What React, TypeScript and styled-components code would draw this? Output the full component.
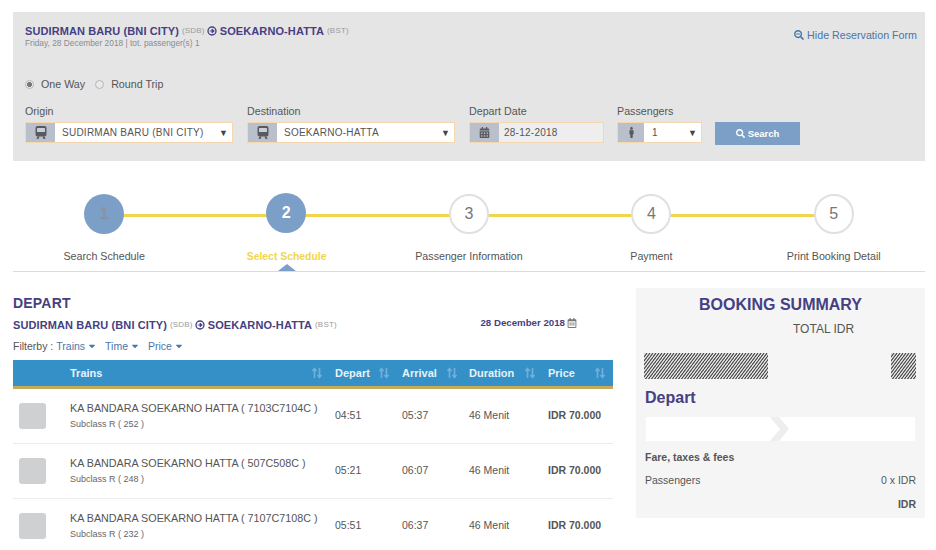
import React from "react";
import styled, { createGlobalStyle } from "styled-components";
import { FaMale, FaSearch, FaSearchMinus, FaCaretDown, FaRegCalendarAlt, FaCalendarAlt } from "react-icons/fa";

const Global = createGlobalStyle`
  html, body { margin: 0; padding: 0; background: #fff; }
  body { font-family: "Liberation Sans", Arial, sans-serif; color: #555; overflow: hidden; height: 550px; }
  * { box-sizing: border-box; }
`;

const Page = styled.div`
  width: 936px;
  height: 550px;
  padding: 12px 11px 0 13px;
  overflow: hidden;
`;

const Panel = styled.section`
  height: 149px;
  background: #e5e5e6;
  padding: 12px 8px 0 12px;
  display: flex;
  flex-direction: column;
`;

const PanelHead = styled.div`
  display: flex;
  justify-content: space-between;
  align-items: flex-start;
  height: 39px;
`;

const RouteLine = styled.div`
  display: flex;
  align-items: center;
  gap: 3px;
  height: 13px;
  font-size: 11px;
  font-weight: 700;
  color: #463f82;
  letter-spacing: 0.1px;
  white-space: nowrap;
  svg { margin: 0 0 0 -1px; }
`;

const Code = styled.span`
  font-size: 8px;
  font-weight: 400;
  color: #9a9a9e;
  letter-spacing: 0.2px;
`;

const SubLine = styled.div`
  font-size: 8.35px;
  line-height: 11px;
  color: #8c8c8c;
  margin-top: 1px;
`;

const HideLink = styled.a`
  display: flex;
  align-items: center;
  gap: 3px;
  font-size: 10.7px;
  color: #4a76a8;
  margin-top: 5px;
  svg { font-size: 10px; }
`;

const TripRow = styled.div`
  display: flex;
  align-items: center;
  height: 14px;
  margin-top: 14px;
  font-size: 10.7px;
  color: #555;
`;

const Radio = styled.span<{ $on?: boolean }>`
  width: 9px;
  height: 9px;
  border-radius: 50%;
  border: 1px solid #b5b5b5;
  background: ${(p) => (p.$on ? "radial-gradient(circle, #777 0 2.2px, #eee 2.8px)" : "#e9e9e9")};
  margin-right: 7px;
  margin-left: ${(p) => (p.$on ? 0 : 10)}px;
`;

const FormRow = styled.div`
  display: flex;
  align-items: flex-start;
  margin-top: 14px;
`;

const Field = styled.div<{ $w: number; $mr: number }>`
  width: ${(p) => p.$w}px;
  margin-right: ${(p) => p.$mr}px;
`;

const FieldLabel = styled.div`
  font-size: 10.7px;
  line-height: 13px;
  color: #555;
  margin-bottom: 4px;
`;

const Control = styled.div<{ $tint?: boolean }>`
  height: 21px;
  display: flex;
  align-items: stretch;
  border: 1px solid #f4d7b0;
  background: ${(p) => (p.$tint ? "#eeeeee" : "#fff")};
  font-size: 10px;
  color: #555;
  letter-spacing: 0.25px;
`;

const Addon = styled.span<{ $w: number }>`
  width: ${(p) => p.$w}px;
  flex: none;
  background: #b9c0cc;
  display: flex;
  align-items: center;
  justify-content: center;
  color: #5a5a5e;
  font-size: 11px;
`;

const ControlText = styled.span<{ $pl: number }>`
  flex: 1;
  display: flex;
  align-items: center;
  padding-left: ${(p) => p.$pl}px;
  white-space: nowrap;
`;

const Arrow = styled.span`
  width: 13px;
  flex: none;
  display: flex;
  align-items: center;
  font-size: 9px;
  color: #444;
`;

const SearchButton = styled.button`
  width: 85px;
  height: 23px;
  margin-top: 17px;
  border: 0;
  background: #7b9fc7;
  color: #fff;
  font: 700 9.5px "Liberation Sans", Arial, sans-serif;
  display: flex;
  align-items: center;
  justify-content: center;
  gap: 3px;
  padding: 0;
  svg { font-size: 9px; }
`;

const Stepper = styled.section`
  position: relative;
  display: grid;
  grid-template-columns: repeat(5, 1fr);
  height: 111px;
  border-bottom: 1px solid #dcdcdc;
`;

const Step = styled.div`
  position: relative;
  display: flex;
  flex-direction: column;
  align-items: center;
  padding-top: 33px;
`;

const Connector = styled.span`
  position: absolute;
  top: 53px;
  left: 50%;
  width: 100%;
  height: 3px;
  background: #f0d64e;
`;

const Bubble = styled.span<{ $done?: boolean; $active?: boolean }>`
  position: relative;
  z-index: 1;
  width: 40px;
  height: 40px;
  border-radius: 50%;
  display: flex;
  align-items: center;
  justify-content: center;
  font-size: 16px;
  margin-top: ${(p) => (p.$active ? -1 : 0)}px;
  margin-bottom: ${(p) => (p.$active ? 1 : 0)}px;
  margin-left: ${(p) => (p.$active ? -1 : 0)}px;
  font-weight: ${(p) => (p.$active || p.$done ? 700 : 400)};
  background: ${(p) => (p.$done || p.$active ? "#7b9fc7" : "#fff")};
  border: ${(p) => (p.$done || p.$active ? "none" : "2px solid #e0e0e0")};
  color: ${(p) => (p.$active ? "#fff" : p.$done ? "#8a93a0" : "#777")};
`;

const StepLabel = styled.span<{ $active?: boolean }>`
  margin-top: ${(p) => (p.$active ? 16 : 15)}px;
  font-size: ${(p) => (p.$active ? 10.4 : 10.7)}px;
  line-height: 14px;
  color: ${(p) => (p.$active ? "#f0d64e" : "#555")};
  font-weight: ${(p) => (p.$active ? 700 : 400)};
  white-space: nowrap;
`;

const Pointer = styled.span`
  position: absolute;
  left: 50%;
  bottom: 0;
  margin-left: -9px;
  width: 0;
  height: 0;
  border-left: 9px solid transparent;
  border-right: 9px solid transparent;
  border-bottom: 7px solid #7b9fc7;
`;

const Content = styled.div`
  display: flex;
  justify-content: space-between;
`;

const Results = styled.section`
  width: 600px;
  padding-top: 24px;
`;

const DepartTitle = styled.h2`
  margin: 0;
  font-size: 14px;
  line-height: 15px;
  font-weight: 700;
  color: #463f82;
  letter-spacing: 0.2px;
`;

const RouteBar = styled.div`
  display: flex;
  align-items: center;
  justify-content: space-between;
  margin-top: 7px;
  padding-right: 36px;
`;

const DateTag = styled.div`
  display: flex;
  align-items: center;
  gap: 2px;
  margin-top: -4px;
  font-size: 9.7px;
  font-weight: 700;
  color: #463f82;
  svg { font-size: 10px; color: #777; }
`;

const FilterBar = styled.div`
  display: flex;
  align-items: center;
  height: 14px;
  margin-top: 8px;
  font-size: 10.5px;
  color: #555;
`;

const FilterLink = styled.a`
  display: inline-flex;
  align-items: center;
  gap: 2px;
  color: #4a76a8;
  margin-right: 8px;
  &:first-of-type { margin-left: 3px; }
  svg { font-size: 10px; }
`;

const columns = "57px 265px 67px 67px 79px 65px";

const TableHead = styled.div`
  display: grid;
  grid-template-columns: ${columns};
  height: 29px;
  margin-top: 7px;
  background: #3490c6;
  border-bottom: 3px solid #c7a95a;
  align-items: center;
  color: #e8f2f8;
  font-size: 11px;
  font-weight: 700;
`;

const HeadCell = styled.div<{ $pr?: number }>`
  display: flex;
  justify-content: space-between;
  align-items: center;
  padding-right: ${(p) => p.$pr ?? 12}px;
`;

const SortIcon = styled.svg`
  width: 12px;
  height: 12px;
  color: #6eb0da;
`;

const Row = styled.div`
  display: grid;
  grid-template-columns: ${columns};
  height: 55px;
  align-items: center;
  border-bottom: 1px solid #ececec;
  font-size: 10.5px;
  color: #555;
`;

const Thumb = styled.span`
  display: block;
  width: 27px;
  height: 26px;
  margin-left: 6px;
  border-radius: 3px;
  background: #cfd0d2;
`;

const TrainInfo = styled.div`
  margin-top: -2px;
`;

const TrainName = styled.div`
  font-size: 10.75px;
  line-height: 14px;
  white-space: nowrap;
`;

const Subclass = styled.div`
  font-size: 9px;
  line-height: 12px;
  margin-top: 3px;
  color: #666;
`;

const Cell = styled.div<{ $strong?: boolean }>`
  margin-top: -3px;
  font-weight: ${(p) => (p.$strong ? 700 : 400)};
  white-space: nowrap;
`;

const Summary = styled.aside`
  width: 289px;
  height: 230px;
  margin-top: 16px;
  background: #f5f5f6;
  padding: 7px 9px 0 8px;
`;

const SummaryTitle = styled.h3`
  margin: 0;
  text-align: center;
  padding-left: 1px;
  font-size: 16px;
  line-height: 20px;
  font-weight: 700;
  color: #463f82;
`;

const TotalLine = styled.div`
  font-size: 12px;
  line-height: 14px;
  color: #555;
  margin-top: 7px;
  padding-left: 149px;
`;

const HatchRow = styled.div`
  display: flex;
  justify-content: space-between;
  margin-top: 17px;
`;

const HatchSvg = styled.svg`
  display: block;
  height: 26px;
`;

const SummaryDepart = styled.div`
  font-size: 16px;
  line-height: 20px;
  font-weight: 700;
  color: #463f82;
  margin-top: 9px;
  padding-left: 1px;
`;

const RouteStrip = styled.div`
  height: 24px;
  margin: 9px 1px 0 2px;
  background: #fff;
  display: flex;
  align-items: center;
  padding-left: 124px;
  svg { width: 20px; height: 24px; }
`;

const SummaryLine = styled.div<{ $bold?: boolean; $mt: number }>`
  display: flex;
  justify-content: space-between;
  margin-top: ${(p) => p.$mt}px;
  padding-left: 1px;
  font-size: 10.5px;
  line-height: 13px;
  font-weight: ${(p) => (p.$bold ? 700 : 400)};
  color: #555;
`;

const CircleArrow = () => (
  <svg width="10" height="10" viewBox="0 0 12 12" aria-hidden="true">
    <circle cx="6" cy="6" r="4.8" fill="none" stroke="currentColor" strokeWidth="1.6" />
    <path d="M3.2 6H7M6 3.6 8.8 6 6 8.4Z" fill="currentColor" stroke="currentColor" strokeWidth="1" />
  </svg>
);

const Sort = () => (
  <SortIcon viewBox="0 0 12 12" aria-hidden="true">
    <path d="M3.5 11V3M1.5 4 3.5 1.5 5.5 4M8.5 1v8M6.5 8l2 2.5 2-2.5" fill="none" stroke="currentColor" strokeWidth="1.7" />
  </SortIcon>
);

const TrainGlyph = () => (
  <svg width="12" height="13" viewBox="0 0 12 13" aria-hidden="true">
    <path d="M2.5 0h7A2 2 0 0 1 11.5 2v6.5a2 2 0 0 1-2 2h-7a2 2 0 0 1-2-2V2a2 2 0 0 1 2-2Z" fill="currentColor" />
    <rect x="2" y="2" width="8" height="4" rx="0.5" fill="#c9ced6" />
    <path d="M2.5 10.5h2L3.5 13h-2ZM9.5 10.5h-2l1 2.5h2Z" fill="currentColor" />
  </svg>
);

const Hatch = ({ w, id }: { w: number; id: string }) => (
  <HatchSvg width={w} viewBox={`0 0 ${w} 26`} aria-hidden="true">
    <defs>
      <pattern id={id} width="3" height="4" patternUnits="userSpaceOnUse">
        <rect width="3" height="4" fill="#efefef" />
        <path d="M-1.5 6 4.5 -2" stroke="#3f3f3f" strokeWidth="1.1" />
        <path d="M-3 4 0 0M3 4 6 0" stroke="#3f3f3f" strokeWidth="1.1" />
      </pattern>
    </defs>
    <rect width={w} height="26" fill={`url(#${id})`} />
  </HatchSvg>
);

const Route = () => (
  <RouteLine>
    <span>SUDIRMAN BARU (BNI CITY)</span>
    <Code>(SDB)</Code>
    <CircleArrow />
    <span>SOEKARNO-HATTA</span>
    <Code>(BST)</Code>
  </RouteLine>
);

const steps = ["Search Schedule", "Select Schedule", "Passenger Information", "Payment", "Print Booking Detail"];

const trains = [
  { name: "KA BANDARA SOEKARNO HATTA ( 7103C7104C )", sub: "Subclass R ( 252 )", dep: "04:51", arr: "05:37" },
  { name: "KA BANDARA SOEKARNO HATTA ( 507C508C )", sub: "Subclass R ( 248 )", dep: "05:21", arr: "06:07" },
  { name: "KA BANDARA SOEKARNO HATTA ( 7107C7108C )", sub: "Subclass R ( 232 )", dep: "05:51", arr: "06:37" },
];

export default function App() {
  return (
    <Page>
      <Global />
      <Panel>
        <PanelHead>
          <div>
            <Route />
            <SubLine>Friday, 28 December 2018 | tot. passenger(s) 1</SubLine>
          </div>
          <HideLink><FaSearchMinus />Hide Reservation Form</HideLink>
        </PanelHead>
        <TripRow>
          <Radio $on />One Way<Radio />Round Trip
        </TripRow>
        <FormRow>
          <Field $w={208} $mr={14}>
            <FieldLabel>Origin</FieldLabel>
            <Control>
              <Addon $w={29}><TrainGlyph /></Addon>
              <ControlText $pl={7}>SUDIRMAN BARU (BNI CITY)</ControlText>
              <Arrow>▼</Arrow>
            </Control>
          </Field>
          <Field $w={208} $mr={14}>
            <FieldLabel>Destination</FieldLabel>
            <Control>
              <Addon $w={29}><TrainGlyph /></Addon>
              <ControlText $pl={7}>SOEKARNO-HATTA</ControlText>
              <Arrow>▼</Arrow>
            </Control>
          </Field>
          <Field $w={135} $mr={13}>
            <FieldLabel>Depart Date</FieldLabel>
            <Control $tint>
              <Addon $w={29}><FaCalendarAlt /></Addon>
              <ControlText $pl={5}>28-12-2018</ControlText>
            </Control>
          </Field>
          <Field $w={85} $mr={13}>
            <FieldLabel>Passengers</FieldLabel>
            <Control>
              <Addon $w={26}><FaMale /></Addon>
              <ControlText $pl={8}>1</ControlText>
              <Arrow>▼</Arrow>
            </Control>
          </Field>
          <SearchButton><FaSearch />Search</SearchButton>
        </FormRow>
      </Panel>

      <Stepper>
        {steps.map((label, i) => (
          <Step key={label}>
            {i < steps.length - 1 && <Connector />}
            <Bubble $done={i === 0} $active={i === 1}>{i + 1}</Bubble>
            <StepLabel $active={i === 1}>{label}</StepLabel>
            {i === 1 && <Pointer />}
          </Step>
        ))}
      </Stepper>

      <Content>
        <Results>
          <DepartTitle>DEPART</DepartTitle>
          <RouteBar>
            <Route />
            <DateTag>28 December 2018 <FaRegCalendarAlt /></DateTag>
          </RouteBar>
          <FilterBar>
            Filterby :
            <FilterLink>Trains<FaCaretDown /></FilterLink>
            <FilterLink>Time<FaCaretDown /></FilterLink>
            <FilterLink>Price<FaCaretDown /></FilterLink>
          </FilterBar>
          <TableHead>
            <span />
            <HeadCell>Trains<Sort /></HeadCell>
            <HeadCell>Depart<Sort /></HeadCell>
            <HeadCell $pr={11}>Arrival<Sort /></HeadCell>
            <HeadCell>Duration<Sort /></HeadCell>
            <HeadCell $pr={7}>Price<Sort /></HeadCell>
          </TableHead>
          {trains.map((t) => (
            <Row key={t.name}>
              <Thumb />
              <TrainInfo>
                <TrainName>{t.name}</TrainName>
                <Subclass>{t.sub}</Subclass>
              </TrainInfo>
              <Cell>{t.dep}</Cell>
              <Cell>{t.arr}</Cell>
              <Cell>46 Menit</Cell>
              <Cell $strong>IDR 70.000</Cell>
            </Row>
          ))}
        </Results>
        <Summary>
          <SummaryTitle>BOOKING SUMMARY</SummaryTitle>
          <TotalLine>TOTAL IDR</TotalLine>
          <HatchRow>
            <Hatch w={124} id="hatch-a" />
            <Hatch w={25} id="hatch-b" />
          </HatchRow>
          <SummaryDepart>Depart</SummaryDepart>
          <RouteStrip>
            <svg viewBox="0 0 20 24" aria-hidden="true">
              <path d="M0 0h9l10 12-10 12H0l10-12Z" fill="#eeeeef" />
            </svg>
          </RouteStrip>
          <SummaryLine $bold $mt={10}>Fare, taxes &amp; fees</SummaryLine>
          <SummaryLine $mt={10}><span>Passengers</span><span>0 x IDR</span></SummaryLine>
          <SummaryLine $bold $mt={11}><span /><span>IDR</span></SummaryLine>
        </Summary>
      </Content>
    </Page>
  );
}
